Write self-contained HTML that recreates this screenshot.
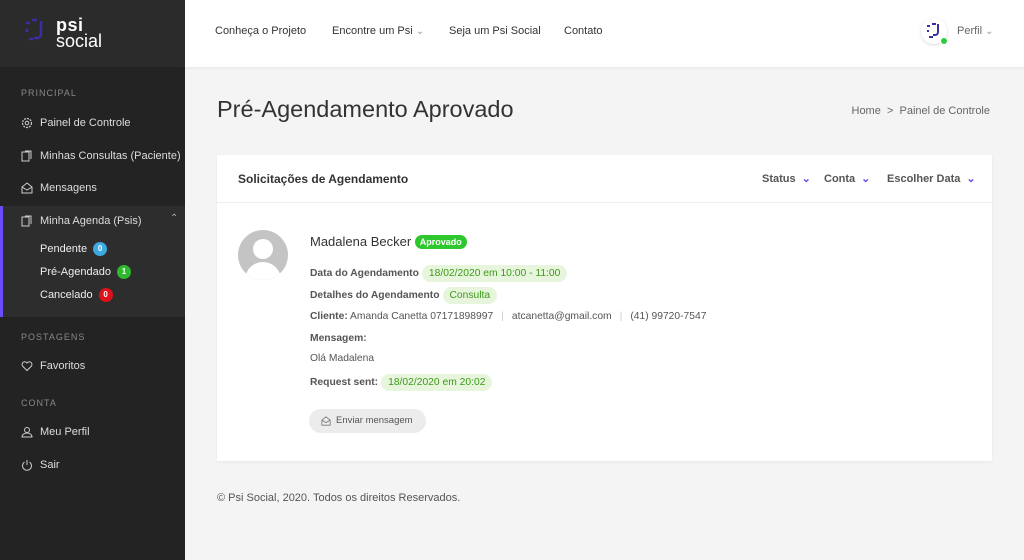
<!DOCTYPE html>
<html><head><meta charset="utf-8"><style>
*{box-sizing:border-box;margin:0;padding:0}
body{width:1024px;height:560px;overflow:hidden;font-family:"Liberation Sans",sans-serif;background:#f4f4f4;color:#333;position:relative}
.sb{position:absolute;left:0;top:0;width:185px;height:560px;background:#232323}
.sbh{height:67px;background:#2b2b2b;position:relative}
.logo{position:absolute;left:24px;top:18px}
.logo .t1{position:absolute;left:32px;top:-3px;color:#fff;font-weight:bold;font-size:18px;letter-spacing:.5px}
.logo .t2{position:absolute;left:32px;top:13px;color:#fff;font-size:18px;white-space:nowrap}
.sec{color:#888;font-size:9px;letter-spacing:1px;position:absolute;left:21px}
.it{position:absolute;left:21px;color:#ddd;font-size:11px;display:flex;align-items:center;white-space:nowrap}
.it svg{margin-right:7px}
.act{position:absolute;left:0;top:206px;width:185px;height:111px;background:#2d2d2d;border-left:3px solid #6b4cf6}
.sub{position:absolute;left:40px;color:#eee;font-size:11px;display:flex;align-items:center}
.bd{display:inline-block;width:14px;height:14px;border-radius:7px;color:#fff;font-size:8px;font-weight:bold;text-align:center;line-height:14px;margin-left:6px}
.top{position:absolute;left:185px;top:0;width:839px;height:67px;background:#fff;box-shadow:0 1px 3px rgba(0,0,0,.06)}
.nav{position:absolute;top:25px;font-size:11px;color:#333}
h1{position:absolute;left:217px;top:96px;font-weight:normal;font-size:23.5px;color:#333}
.bc{position:absolute;right:34px;top:105px;font-size:11px;color:#666}
.card{position:absolute;left:217px;top:155px;width:775px;height:306px;background:#fff;box-shadow:0 1px 3px rgba(0,0,0,.06)}
.ch{height:48px;border-bottom:1px solid #eee;position:relative}
.ch .tt{position:absolute;left:21px;top:17px;font-size:12px;color:#333;font-weight:bold}
.f{position:absolute;top:17px;font-size:11px;color:#555;font-weight:bold}
.f i{color:#6b4cf6;font-style:normal;font-size:11px;margin-left:6px}
.av{position:absolute;left:21px;top:75px;width:50px;height:50px;border-radius:25px;background:#c4c4c4;overflow:hidden}
.row{position:absolute;left:93px;font-size:10.3px;color:#555;white-space:nowrap}
.row b{color:#555}
.pill{display:inline-block;background:#e6f5dc;color:#3e9a1a;border-radius:10px;padding:3px 7px;margin-left:3px}
.btn{position:absolute;left:92px;top:254px;width:117px;height:24px;background:#ececec;border-radius:12px;font-size:9.5px;color:#555;line-height:24px;padding-left:27px}
.sep{color:#ccc;margin:0 8px}
</style></head><body>
<div class="sb">
 <div class="sbh"><div class="logo">
  <svg width="26" height="26" viewBox="0 0 26 26"><path d="M2 5h4M8 2h5" stroke="#3a2fa0" stroke-width="2.5" fill="none"/><path d="M17 3v13a4 4 0 0 1-4 4h-3" stroke="#3a2fa0" stroke-width="2.5" fill="none"/><path d="M3 11v3M5 21h4" stroke="#3a2fa0" stroke-width="2.5"/></svg>
  <span class="t1">psi</span><span class="t2">social</span></div></div>
 <div class="sec" style="top:88px">PRINCIPAL</div>
 <div class="it" style="top:117px"><svg width="12" height="12" viewBox="0 0 12 12"><circle cx="6" cy="6" r="4.5" fill="none" stroke="#ccc" stroke-width="1.2" stroke-dasharray="2 1"/><circle cx="6" cy="6" r="1.8" fill="none" stroke="#ccc"/></svg>Painel de Controle</div>
 <div class="it" style="top:150px"><svg width="12" height="12" viewBox="0 0 12 12"><rect x="1" y="2" width="7" height="9" fill="none" stroke="#ccc"/><path d="M4 1h6v8" fill="none" stroke="#ccc"/></svg>Minhas Consultas (Paciente)</div>
 <div class="it" style="top:182px"><svg width="12" height="12" viewBox="0 0 12 12"><path d="M1 5l5-4 5 4v6H1zM1 5l5 3 5-3" fill="none" stroke="#ccc"/></svg>Mensagens</div>
 <div class="act"></div>
 <div class="it" style="top:215px"><svg width="12" height="12" viewBox="0 0 12 12"><rect x="1" y="2" width="7" height="9" fill="none" stroke="#ccc"/><path d="M4 1h6v8" fill="none" stroke="#ccc"/></svg>Minha Agenda (Psis)</div>
 <div style="position:absolute;left:170px;top:213px;color:#aaa;font-size:10px">&#8963;</div>
 <div class="sub" style="top:242px">Pendente<span class="bd" style="background:#3da9e0">0</span></div>
 <div class="sub" style="top:265px">Pré-Agendado<span class="bd" style="background:#2eb82e">1</span></div>
 <div class="sub" style="top:288px">Cancelado<span class="bd" style="background:#e0101a">0</span></div>
 <div class="sec" style="top:332px">POSTAGENS</div>
 <div class="it" style="top:360px"><svg width="12" height="12" viewBox="0 0 12 12"><path d="M6 10.5L1.5 6A2.5 2.5 0 0 1 6 3a2.5 2.5 0 0 1 4.5 3z" fill="none" stroke="#ccc"/></svg>Favoritos</div>
 <div class="sec" style="top:398px">CONTA</div>
 <div class="it" style="top:426px"><svg width="12" height="12" viewBox="0 0 12 12"><circle cx="6" cy="4" r="2.5" fill="none" stroke="#ccc"/><path d="M1 11a5 4 0 0 1 10 0z" fill="none" stroke="#ccc"/></svg>Meu Perfil</div>
 <div class="it" style="top:459px"><svg width="12" height="12" viewBox="0 0 12 12"><path d="M3.5 3a4.5 4.5 0 1 0 5 0M6 1v5" fill="none" stroke="#ccc"/></svg>Sair</div>
</div>
<div class="top">
 <span class="nav" style="left:30px">Conheça o Projeto</span>
 <span class="nav" style="left:147px">Encontre um Psi <span style="color:#999;font-size:10px">&#8964;</span></span>
 <span class="nav" style="left:264px">Seja um Psi Social</span>
 <span class="nav" style="left:379px">Contato</span>
 <div style="position:absolute;left:736px;top:18px;width:26px;height:26px;border-radius:13px;background:#fff;box-shadow:0 1px 3px rgba(0,0,0,.15)">
  <svg width="26" height="26" viewBox="0 0 26 26"><path d="M6 8h3M11 6h4M17 6v8a3 3 0 0 1-3 3h-2M7 12v2M8 19h4" stroke="#3a2fa0" stroke-width="2" fill="none"/></svg>
  <span style="position:absolute;right:-1px;bottom:-1px;width:8px;height:8px;border-radius:4px;background:#2ecc40;border:1px solid #fff"></span></div>
 <span class="nav" style="left:772px;color:#666">Perfil <span style="color:#999;font-size:10px">&#8964;</span></span>
</div>
<h1>Pré-Agendamento Aprovado</h1>
<div class="bc">Home &nbsp;&gt;&nbsp; Painel de Controle</div>
<div class="card">
 <div class="ch"><span class="tt">Solicitações de Agendamento</span>
  <span class="f" style="left:545px">Status<i>&#8964;</i></span>
  <span class="f" style="left:607px">Conta<i>&#8964;</i></span>
  <span class="f" style="left:670px">Escolher Data<i>&#8964;</i></span></div>
 <div class="av"><div style="position:absolute;left:15px;top:9px;width:20px;height:20px;border-radius:10px;background:#fff"></div><div style="position:absolute;left:7px;top:32px;width:36px;height:30px;border-radius:18px 18px 0 0;background:#fff"></div></div>
 <div class="row" style="top:79px;font-size:13px;color:#333">Madalena Becker <span style="display:inline-block;background:#2ec72e;color:#fff;font-size:9px;font-weight:bold;border-radius:8px;padding:2px 5px;vertical-align:1px">Aprovado</span></div>
 <div class="row" style="top:110px"><b>Data do Agendamento</b><span class="pill">18/02/2020 em 10:00 - 11:00</span></div>
 <div class="row" style="top:132px"><b>Detalhes do Agendamento</b><span class="pill">Consulta</span></div>
 <div class="row" style="top:156px"><b>Cliente:</b> Amanda Canetta 07171898997<span class="sep">|</span>atcanetta@gmail.com<span class="sep">|</span>(41) 99720-7547</div>
 <div class="row" style="top:178px"><b>Mensagem:</b></div>
 <div class="row" style="top:198px">Olá Madalena</div>
 <div class="row" style="top:219px"><b>Request sent:</b><span class="pill">18/02/2020 em 20:02</span></div>
 <div class="btn"><svg style="position:absolute;left:12px;top:7px" width="10" height="10" viewBox="0 0 12 12"><path d="M1 5l5-4 5 4v6H1zM1 5l5 3 5-3" fill="none" stroke="#777"/></svg>Enviar mensagem</div>
</div>
<div style="position:absolute;left:217px;top:492px;font-size:11px;color:#555">© Psi Social, 2020. Todos os direitos Reservados.</div>
</body></html>
